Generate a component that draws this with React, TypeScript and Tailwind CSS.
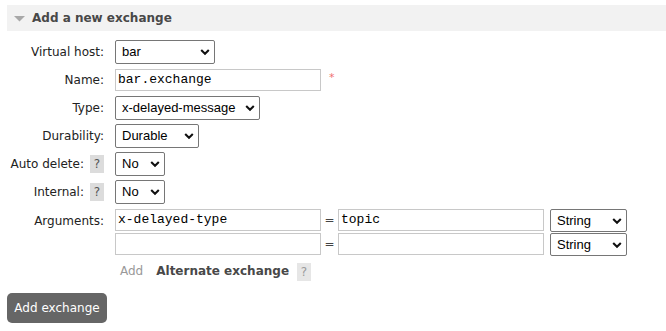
import React from 'react';

const labelFont = { fontFamily: '"DejaVu Sans", Verdana, sans-serif' };

const Chevron = () => (
  <svg width="10" height="7" viewBox="0 0 10 7" className="absolute right-[5px] top-1/2 -translate-y-1/2 pointer-events-none">
    <path d="M1.2 1.5 L5 5.2 L8.8 1.5" fill="none" stroke="#111" strokeWidth="2.1" />
  </svg>
);

const Select: React.FC<{ value: string; width: string; height?: string }> = ({ value, width, height = 'h-[24px]' }) => (
  <div className={`relative ${width} ${height} shrink-0`}>
    <div className="h-full w-full border border-[#767676] rounded-[2px] bg-white pl-[6px] flex items-center text-[13px] text-black font-['Liberation_Sans',Arial,sans-serif]">
      {value}
    </div>
    <Chevron />
  </div>
);

const Input: React.FC<{ value?: string; width?: string }> = ({ value = '', width = 'w-[206px]' }) => (
  <div className={`${width} h-[22px] shrink-0 border border-[#c8c8c8] bg-white pl-[2px] flex items-center text-[13px] text-black font-['Liberation_Mono','Courier_New',monospace]`}>
    {value}
  </div>
);

const Help: React.FC<{ light?: boolean }> = ({ light }) => (
  <span
    className={`inline-flex w-[14px] h-[18px] items-center justify-center text-[12px] ${
      light ? 'bg-[#e6e6e6] text-[#9a9a9a]' : 'bg-[#dcdcdc] text-[#555]'
    }`}
  >
    ?
  </span>
);

const Row: React.FC<{ label: string; help?: boolean; children: React.ReactNode }> = ({ label, help, children }) => (
  <div className="flex items-center h-[28px]">
    <div className="w-[104px] shrink-0 flex items-center justify-end gap-[6px] text-[12px] text-[#222]">
      <span>{label}</span>
      {help && <Help />}
    </div>
    <div className="ml-[11px] flex items-center">{children}</div>
  </div>
);

export default function App() {
  return (
    <div className="w-[666px] h-[331px] bg-white overflow-hidden" style={labelFont}>
      <div className="pl-[7px] pt-[5px]">
        <div className="h-[26px] bg-[#f2f2f2] flex items-center">
          <svg width="11" height="6" viewBox="0 0 11 6" className="ml-[7px] mt-[1px]">
            <path d="M0 0 L11 0 L5.5 5.5 Z" fill="#a8a8a8" />
          </svg>
          <span className="ml-[7px] text-[12px] font-bold text-[#484848]">Add a new exchange</span>
        </div>
      </div>

      <div className="mt-[7px]">
        <Row label="Virtual host:">
          <Select value="bar" width="w-[100px]" />
        </Row>
        <Row label="Name:">
          <Input value="bar.exchange" />
          <span className="ml-[8px] -mt-[4px] text-[11px] text-[#f07070]">*</span>
        </Row>
        <Row label="Type:">
          <Select value="x-delayed-message" width="w-[145px]" />
        </Row>
        <Row label="Durability:">
          <Select value="Durable" width="w-[84px]" />
        </Row>
        <Row label="Auto delete:" help>
          <Select value="No" width="w-[50px]" />
        </Row>
        <Row label="Internal:" help>
          <Select value="No" width="w-[50px]" />
        </Row>

        <div className="flex mt-[3px]">
          <div className="w-[104px] shrink-0 h-[23px] flex items-center justify-end text-[12px] text-[#222]">Arguments:</div>
          <div className="ml-[11px] flex flex-col gap-[1px]">
            <div className="flex items-start h-[23px]">
              <Input value="x-delayed-type" />
              <span className="w-[17px] h-[22px] flex items-center justify-center text-[12px] text-[#444]">=</span>
              <Input value="topic" />
              <div className="ml-[6px]">
                <Select value="String" width="w-[77px]" height="h-[23px]" />
              </div>
            </div>
            <div className="flex items-start h-[23px]">
              <Input />
              <span className="w-[17px] h-[22px] flex items-center justify-center text-[12px] text-[#444]">=</span>
              <Input />
              <div className="ml-[6px]">
                <Select value="String" width="w-[77px]" height="h-[23px]" />
              </div>
            </div>
            <div className="flex items-center h-[22px] mt-[3px]">
              <span className="ml-[5px] text-[12px] text-[#999]">Add</span>
              <span className="ml-[13px] text-[12px] font-bold text-[#484848]">Alternate exchange</span>
              <span className="ml-[8px]">
                <Help light />
              </span>
            </div>
          </div>
        </div>

        <div className="pl-[7px] mt-[11px]">
          <button className="w-[100px] h-[30px] rounded-[5px] bg-[#666] text-white text-[12px] flex items-center justify-center">
            Add exchange
          </button>
        </div>
      </div>
    </div>
  );
}
